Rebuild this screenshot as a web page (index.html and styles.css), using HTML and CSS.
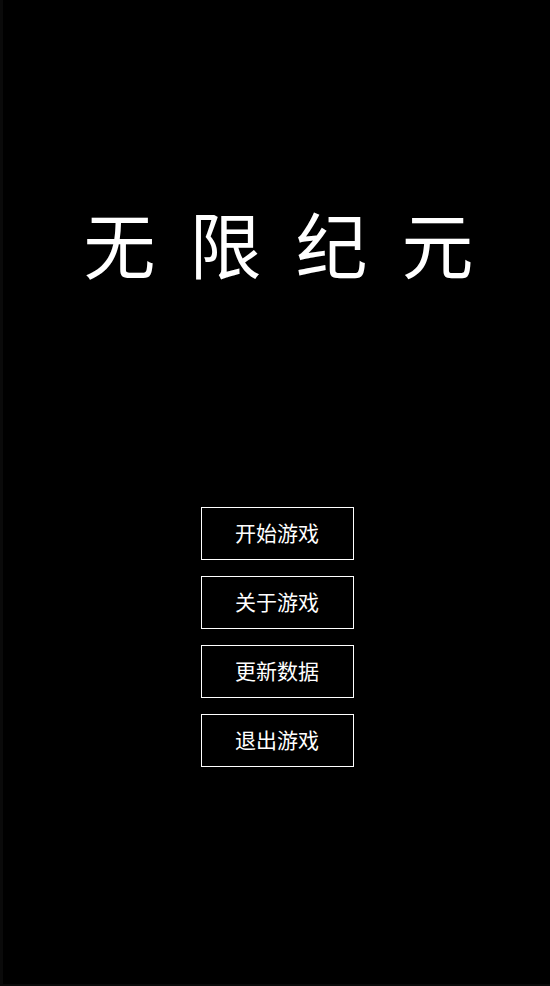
FILE: index.html
```html
<!DOCTYPE html>
<html lang="zh-CN">
<head>
  <meta charset="UTF-8">
  <meta name="viewport" content="width=device-width, initial-scale=1.0">
  <title>无限纪元</title>
  <link rel="stylesheet" href="styles.css">
</head>
<body>
  <div class="screen">
    <h1 class="title">无限纪元</h1>
    <div class="menu">
      <button class="menu-button">开始游戏</button>
      <button class="menu-button">关于游戏</button>
      <button class="menu-button">更新数据</button>
      <button class="menu-button">退出游戏</button>
    </div>
  </div>
</body>
</html>
```

FILE: styles.css
```css
body {
  margin: 0;
  padding: 0;
  background: #000;
  font-family: "Noto Sans CJK SC", "Noto Sans", sans-serif;
  color: #fff;
}

.screen {
  box-sizing: border-box;
  height: 986px;
  border-left: 3px solid #0a0a0a;
  border-bottom: 2px solid #0a0a0a;
  display: flex;
  flex-direction: column;
  align-items: center;
}

.title {
  margin: 190px 0 0 0;
  padding-left: 38px;
  font-size: 72px;
  font-weight: normal;
  letter-spacing: 34px;
  line-height: 104px;
}

.menu {
  margin-top: 213px;
  margin-left: 1px;
  display: flex;
  flex-direction: column;
  gap: 16px;
}

.menu-button {
  width: 153px;
  height: 53px;
  background: #000;
  color: #fff;
  border: 1.5px solid #fff;
  font-family: "Noto Sans CJK SC", sans-serif;
  font-size: 21px;
  padding: 0 0 3px 0;
  cursor: pointer;
}
```
